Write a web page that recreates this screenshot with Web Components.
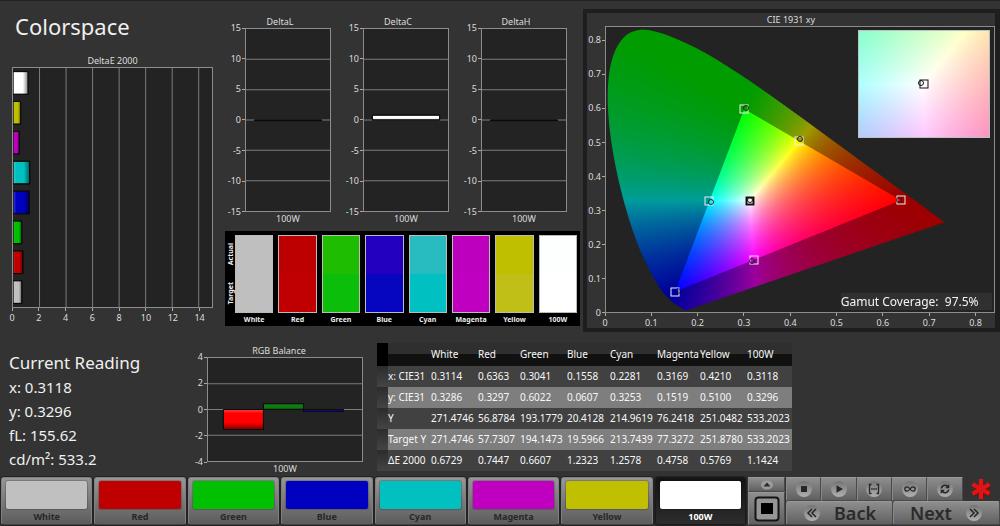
<!DOCTYPE html>
<html lang="en">
<head>
<meta charset="utf-8">
<title>Colorspace</title>
<style>
  body { margin: 0; background: #333; color: #f0f0f0; font-family: "Noto Sans", "Open Sans", sans-serif; }
</style>
</head>
<body>
<calibration-app></calibration-app>

<script>
const PATCHES = [
  { name: 'White',   x: .3114, y: .3286, Y: '271.4746', target: '271.4746', de: .6729,  actual: '#bfbfbf', ideal: '#bfbfbf' },
  { name: 'Red',     x: .6363, y: .3297, Y: '56.8784',  target: '57.7307',  de: .7447,  actual: '#bc0000', ideal: '#c00000' },
  { name: 'Green',   x: .3041, y: .6022, Y: '193.1779', target: '194.1473', de: .6607,  actual: '#1fbd00', ideal: '#0abe0a' },
  { name: 'Blue',    x: .1558, y: .0607, Y: '20.4128',  target: '19.5966',  de: 1.2323, actual: '#2300c0', ideal: '#0606c0' },
  { name: 'Cyan',    x: .2281, y: .3253, Y: '214.9619', target: '213.7439', de: 1.2578, actual: '#28bcc0', ideal: '#00c0c2' },
  { name: 'Magenta', x: .3169, y: .1519, Y: '76.2418',  target: '77.3272',  de: .4758,  actual: '#bd00bd', ideal: '#c000c0' },
  { name: 'Yellow',  x: .4210, y: .5100, Y: '251.0482', target: '251.8780', de: .5769,  actual: '#bfbf00', ideal: '#bfbf18' },
  { name: '100W',    x: .3118, y: .3296, Y: '533.2023', target: '533.2023', de: 1.1424, actual: '#fdfffe', ideal: '#ffffff' }
];
const FILL = { White: '#c0c0c0', Red: '#c00000', Green: '#00c000', Blue: '#0000c0', Cyan: '#00c0c0', Magenta: '#c000c0', Yellow: '#c0c000', '100W': '#ffffff' };

/* Framed plot with a heading, tick labels and grid lines; the series is slotted in. */
class PlotChart extends HTMLElement {
  connectedCallback() {
    const list = n => (this.getAttribute(n) || '').split(',').filter(Boolean);
    const xs = list('x-ticks'), ys = list('y-ticks');
    const over = +(this.getAttribute('overrun') || 0);
    const grid = this.getAttribute('grid');
    let lines = '';
    if (grid === 'h') for (let i = 1; i < ys.length - 1; i++) {
      const p = i / (ys.length - 1) * 100;
      lines += `<line x1="0" x2="100" y1="${p}" y2="${p}"/>`;
    }
    if (grid === 'v') for (let i = 1; i < xs.length; i++) {
      const p = i / (xs.length - 1 + over) * 100;
      lines += `<line y1="0" y2="100" x1="${p}" x2="${p}"/>`;
    }
    this.attachShadow({ mode: 'open' }).innerHTML = `<style>
      :host { display: grid; grid-template-columns: var(--y-axis, 16px) 1fr; grid-template-rows: 13px 1fr var(--x-axis, 12px); font-size: 9px; line-height: 14px; color: #ddd; min-width: 0; min-height: 0; }
      .title { grid-column: 1 / -1; text-align: center; }
      .y { display: flex; flex-direction: column; }
      .y .run { display: flex; flex-direction: column; justify-content: space-between; }
      .y .tick { height: 0; display: flex; align-items: center; justify-content: flex-end; gap: 1px; white-space: nowrap; }
      .y .tick::after { content: ""; width: 3px; height: 1px; background: #aaa; flex: none; }
      .plot { position: relative; background: #232323; border: 1px solid #8c8c8c; }
      .lines { position: absolute; inset: 0; width: 100%; height: 100%; }
      line { stroke: #7c7c7c; vector-effect: non-scaling-stroke; }
      .x { grid-column: 2; display: flex; }
      .x .run { display: flex; justify-content: space-between; }
      .x .tick { width: 0; display: flex; flex-direction: column; align-items: center; white-space: nowrap; }
      .x .tick::before { content: ""; width: 1px; height: 3px; background: #aaa; flex: none; }
      .x.single { justify-content: center; }
    </style>
    <div class="title">${this.getAttribute('heading')}</div>
    <div class="y">${ys.length ? `<div style="flex:${over}"></div><div class="run" style="flex:${ys.length - 1}">${ys.map(t => `<span class="tick">${t}</span>`).join('')}</div>` : ''}</div>
    <div class="plot"><svg class="lines" viewBox="0 0 100 100" preserveAspectRatio="none">${lines}</svg><slot></slot></div>
    ${xs.length > 1
      ? `<div class="x"><div class="run" style="flex:${xs.length - 1}">${xs.map(t => `<span class="tick">${t}</span>`).join('')}</div><div style="flex:${over}"></div></div>`
      : `<div class="x single">${xs[0] || ''}</div>`}`;
  }
}
customElements.define('plot-chart', PlotChart);

/* Bars in data units: "x y width height colour", separated by semicolons. */
class BarSeries extends HTMLElement {
  connectedCallback() {
    const across = this.hasAttribute('across');
    const bars = this.getAttribute('bars').split(';').map(b => b.trim().split(' '));
    this.attachShadow({ mode: 'open' }).innerHTML = `<style>
      :host { position: absolute; inset: 0; }
      svg { width: 100%; height: 100%; display: block; }
      rect { stroke: #0c0c0c; vector-effect: non-scaling-stroke; }
    </style>
    <svg viewBox="${this.getAttribute('range')}" preserveAspectRatio="none">
      <defs><linearGradient id="shade" x1="0" y1="0" x2="${across ? 1 : 0}" y2="${across ? 0 : 1}">
        <stop offset="0" stop-color="#fff" stop-opacity=".25"/><stop offset=".2" stop-color="#fff" stop-opacity="0"/>
        <stop offset=".65" stop-color="#000" stop-opacity="0"/><stop offset="1" stop-color="#000" stop-opacity=".5"/>
      </linearGradient></defs>
      ${bars.map(([x, y, w, h, c]) => { const box = `x="${x}" y="${y}" width="${w}" height="${h}"`; return `<rect ${box} fill="${c}"/><rect ${box} fill="url(#shade)"/>`; }).join('')}
    </svg>`;
  }
}
customElements.define('bar-series', BarSeries);

/* Chromaticity colouring over a window of the xy plane. */
const LOCUS = [[.1741,.005],[.1714,.0051],[.1644,.0109],[.1566,.0177],[.144,.0297],[.1241,.0578],[.1096,.0868],[.0913,.1327],[.0687,.2007],[.0454,.295],[.0235,.4127],[.0082,.5384],[.0039,.6548],[.0139,.7502],[.0389,.812],[.0743,.8338],[.1142,.8262],[.1547,.8059],[.1929,.7816],[.2296,.7543],[.3016,.6923],[.3731,.6245],[.4441,.5547],[.5125,.4866],[.5752,.4242],[.627,.3725],[.6658,.334],[.6915,.3083],[.719,.2809],[.7347,.2653]];
function chromaColor(x, y) {
  const X = x / y, Z = (1 - x - y) / y;
  const c = [3.2406 * X - 1.5372 - .4986 * Z, -.9689 * X + 1.8758 + .0415 * Z, .0557 * X - .204 + 1.057 * Z].map(v => Math.max(0, v));
  const m = Math.max(...c);
  return c.map(v => 255 * v / m);
}
class ChromaField extends HTMLElement {
  connectedCallback() {
    const [x0, x1, y0, y1] = this.getAttribute('window').split(' ').map(Number);
    this.attachShadow({ mode: 'open' }).innerHTML = `<style>:host { display: block; position: absolute; inset: 0; } canvas { display: block; width: 100%; height: 100%; }</style><canvas width="776" height="572"></canvas>`;
    const cv = this.shadowRoot.querySelector('canvas'), W = cv.width, H = cv.height, ctx = cv.getContext('2d');
    const layer = gain => {
      const c = document.createElement('canvas'); c.width = W; c.height = H;
      const g = c.getContext('2d'), im = g.createImageData(W, H);
      for (let j = 0, k = 0; j < H; j++) for (let i = 0; i < W; i++, k += 4) {
        const rgb = chromaColor(x0 + (i + .5) / W * (x1 - x0), y1 - (j + .5) / H * (y1 - y0));
        im.data[k] = rgb[0] * gain; im.data[k + 1] = rgb[1] * gain; im.data[k + 2] = rgb[2] * gain; im.data[k + 3] = 255;
      }
      g.putImageData(im, 0, 0);
      return c;
    };
    if (this.hasAttribute('plain')) { ctx.drawImage(layer(1), 0, 0); return; }
    const at = ([x, y]) => [(x - x0) / (x1 - x0) * W, (y1 - y) / (y1 - y0) * H];
    const locus = new Path2D(), pts = LOCUS.map(at);
    locus.moveTo(...pts[0]);
    for (let i = 0; i < pts.length - 1; i++) {
      const p = pts[Math.max(0, i - 1)], a = pts[i], b = pts[i + 1], n = pts[Math.min(pts.length - 1, i + 2)];
      locus.bezierCurveTo(a[0] + (b[0] - p[0]) / 6, a[1] + (b[1] - p[1]) / 6, b[0] - (n[0] - a[0]) / 6, b[1] - (n[1] - a[1]) / 6, b[0], b[1]);
    }
    locus.closePath();
    const gamut = new Path2D(); [[.64, .33], [.3, .6], [.15, .06]].map(at).forEach(p => gamut.lineTo(...p)); gamut.closePath();
    for (const [path, gain] of [[locus, .61], [gamut, 1]]) {
      ctx.save(); ctx.clip(path); ctx.drawImage(layer(gain), 0, 0); ctx.restore();
    }
  }
}
customElements.define('chroma-field', ChromaField);

class CieDiagram extends HTMLElement {
  connectedCallback() {
    const targets = [[.64,.33],[.3,.6],[.15,.06],[.2246,.3287],[.3209,.1542],[.4193,.5053]];
    const pin = (cls, x, y, ink) => `<i class="${cls}" style="left:${x / .842 * 100}%;bottom:${y / .842 * 100}%;color:${ink}"></i>`;
    this.attachShadow({ mode: 'open' }).innerHTML = `<style>
      :host { display: block; background: #333; border: 4px solid #1e1e1e; border-right-width: 5px; box-sizing: border-box; min-width: 0; }
      plot-chart { height: 100%; --y-axis: 18px; --x-axis: 15px; }
      i { position: absolute; box-sizing: border-box; border: 1px solid; transform: translate(-50%, 50%); }
      .target { width: 9px; height: 9px; }
      .read { width: 6px; height: 6px; border-radius: 50%; }
      .white { border-width: 2px; background: #fff; }
      .inset { position: absolute; top: 3px; right: 4px; width: 34%; height: 38%; box-sizing: border-box; border: 1px solid #b8c4c0; }
      .inset .target { left: 50%; bottom: 50%; color: #111; }
      .inset .read { left: 48%; bottom: 51%; color: #111; }
      output { position: absolute; right: 2px; bottom: 2px; width: 39%; background: #303030; color: #f4f4f4; font-size: 12px; line-height: 17px; white-space: pre; }
    </style>
    <plot-chart heading="CIE 1931 xy" overrun=".42" x-ticks="0,0.1,0.2,0.3,0.4,0.5,0.6,0.7,0.8" y-ticks="0.8,0.7,0.6,0.5,0.4,0.3,0.2,0.1,0">
      <chroma-field window="0 0.842 0 0.842"></chroma-field>
      ${targets.map(([x, y]) => pin('target', x, y, '#eee')).join('')}
      ${PATCHES.slice(1, 7).map(p => pin('read', p.x, p.y, p.name === 'Blue' ? '#0008' : '#222')).join('')}
      ${pin('target white', .3127, .329, '#111')}${pin('read', .3118, .3296, '#111')}
      <div class="inset"><chroma-field plain window="0.2895 0.337 0.3036 0.355"></chroma-field><i class="target"></i><i class="read"></i></div>
      <output>Gamut Coverage:  97.5%</output>
    </plot-chart>`;
  }
}
customElements.define('cie-diagram', CieDiagram);

class SwatchCompare extends HTMLElement {
  connectedCallback() {
    this.attachShadow({ mode: 'open' }).innerHTML = `<style>
      :host { display: flex; gap: 5px; background: #000; padding: 4px 3px 2px 1px; font-size: 7px; font-weight: 700; line-height: 13px; color: #eee; }
      .side { width: 9px; display: flex; flex-direction: column; justify-content: space-around; align-items: center; margin: 0 -5px 11px 0; }
      .side span { writing-mode: vertical-rl; transform: rotate(180deg); line-height: 9px; }
      figure { flex: 1; margin: 0; min-width: 0; display: flex; flex-direction: column; }
      .pair { height: 76px; border: 1px solid #bbb; display: grid; grid-template-rows: 1fr 1fr; }
      figcaption { display: flex; justify-content: center; height: 11px; white-space: nowrap; }
    </style>
    <div class="side"><span>Actual</span><span>Target</span></div>
    ${PATCHES.map(p => `<figure><div class="pair"><div style="background:${p.actual}"></div><div style="background:${p.ideal}"></div></div><figcaption>${p.name}</figcaption></figure>`).join('')}`;
  }
}
customElements.define('swatch-compare', SwatchCompare);

class CurrentReading extends HTMLElement {
  connectedCallback() {
    this.attachShadow({ mode: 'open' }).innerHTML = `<style>
      :host { display: block; padding: 19px 0 5px 9px; font-size: 15px; line-height: 24px; white-space: nowrap; }
      h2 { margin: 0; font-size: 17px; line-height: 24px; font-weight: 400; }
      p { margin: 0; }
    </style><h2>Current Reading</h2><p>x: 0.3118</p><p>y: 0.3296</p><p>fL: 155.62</p><p>cd/m²: 533.2</p>`;
  }
}
customElements.define('current-reading', CurrentReading);

class ReadingsTable extends HTMLElement {
  connectedCallback() {
    const rows = [
      ['x: CIE31', ...PATCHES.map(p => p.x.toFixed(4))], ['y: CIE31', ...PATCHES.map(p => p.y.toFixed(4))],
      ['Y', ...PATCHES.map(p => p.Y)], ['Target Y', ...PATCHES.map(p => p.target)], ['ΔE 2000', ...PATCHES.map(p => p.de.toFixed(4))]
    ];
    this.attachShadow({ mode: 'open' }).innerHTML = `<style>
      :host { display: block; padding: 11px 0 0 14px; min-width: 0; font-size: 10px; }
      table { width: 100%; border-collapse: collapse; table-layout: fixed; color: #f8f8f8; line-height: 21px; white-space: nowrap; }
      th, td { padding: 0; text-align: left; font-weight: 400; }
      thead tr { background: linear-gradient(#2f2f2f 50%, #111 50%); line-height: 23px; }
      tbody tr { background: #414141; }
      tbody tr:nth-child(even) { background: #7e7e7e; }
      .grip { background: linear-gradient(#2c2c2c, #444); }
      thead .grip { background: #000; }
    </style>
    <table><colgroup>${[11, 43, 47, 42, 47, 43, 47, 43, 47, 45].map(w => `<col style="width:${w / 415 * 100}%">`).join('')}</colgroup>
      <thead><tr><td class="grip"></td><td></td>${PATCHES.map(p => `<th scope="col">${p.name}</th>`).join('')}</tr></thead>
      <tbody>${rows.map(([h, ...v]) => `<tr><td class="grip"></td><th scope="row">${h}</th>${v.map(t => `<td>${t}</td>`).join('')}</tr>`).join('')}</tbody>
    </table>`;
  }
}
customElements.define('readings-table', ReadingsTable);

class PatchButton extends HTMLElement {
  connectedCallback() {
    this.attachShadow({ mode: 'open' }).innerHTML = `<style>
      :host { display: block; flex: 1; min-width: 0; }
      button { width: 100%; display: block; border: 1px solid #808080; border-bottom-color: #444; border-radius: 3px; background: linear-gradient(#989898, #5c5c5c); padding: 3px 4px 0; font: 700 9px/15px "Noto Sans", sans-serif; color: #272727; box-shadow: 0 0 0 1px #222; }
      span { display: block; height: 28px; border-radius: 2px; background: var(--patch); box-shadow: 0 0 1px 1px #0003; }
      :host([selected]) button { background: linear-gradient(#141414, #2c2c2c); border-color: #1a1a1a; color: #fff; }
    </style><button type="button"><span></span><slot></slot></button>`;
  }
}
customElements.define('patch-button', PatchButton);

const disc = inner => `<svg class="disc" width="18" height="18" viewBox="0 0 18 18"><defs><linearGradient id="d" x2="0" y2="1"><stop stop-color="#747474"/><stop offset="1" stop-color="#b0b0b0"/></linearGradient></defs><circle cx="9" cy="9" r="8" fill="url(#d)"/>${inner}</svg>`;
const ICONS = {
  Stop: '<path d="M6 6h6v6H6z" fill="#262626"/>',
  Play: '<path d="M6.5 5.2 13 9l-6.500 3.800z" fill="#262626"/>',
  Range: '<path d="M6.500 4.500H4.500v9h2M11.500 4.500h2v9h-2" fill="none" stroke="#262626" stroke-width="1.300"/><path d="M6.200 9h1.500m.6 0h1.500m.6 0h1.500" stroke="#262626" stroke-width="1.500"/>',
  Loop: '<path d="M9 9C7.800 7.300 7 6.800 6 6.800a2.200 2.200 0 0 0 0 4.400C7 11.200 7.800 10.700 9 9s2-2.200 3-2.200a2.200 2.200 0 0 1 0 4.400c-1 0-1.800-.5-3-2.200z" fill="none" stroke="#262626" stroke-width="1.300"/>',
  Refresh: '<path d="M5.300 8.500A3.700 3.700 0 0 1 11.500 6.300M12.700 9.500A3.700 3.700 0 0 1 6.500 11.700" fill="none" stroke="#262626" stroke-width="1.600"/><path d="M13.300 4v4.200H9.200zM4.700 14V9.800h4.100z" fill="#262626"/>'
};
class TransportPad extends HTMLElement {
  connectedCallback() {
    this.attachShadow({ mode: 'open' }).innerHTML = `<style>
      :host { display: grid; grid-template-columns: 37fr 214fr; gap: 1px; min-width: 0; }
      button { margin: 0; padding: 0; border: 1px solid #4a4a4a; border-top-color: #999; border-left-color: #888; background: linear-gradient(#8e8e8e, #606060); color: #2a2a2a; display: flex; align-items: center; justify-content: center; min-width: 0; }
      .left { display: grid; grid-template-rows: 15px 1fr; }
      .right { display: grid; grid-template-rows: 24px 1fr; }
      .tools { display: grid; grid-template-columns: repeat(5, 35fr) 37fr; }
      .nav { display: grid; grid-template-columns: 1fr 1fr; }
      .nav button { font: 600 18px/20px "Noto Sans", sans-serif; gap: 13px; border-radius: 2px; }
      .star { place-self: center; }
      svg { display: block; flex: none; }
    </style>
    <div class="left">
      <button type="button" aria-label="Expand"><svg width="14" height="10" viewBox="0 0 14 10"><ellipse cx="7" cy="5" rx="6" ry="4.500" fill="#9c9c9c"/><path d="M3.500 6.500 7 2.500l3.500 4z" fill="#2a2a2a"/></svg></button>
      <button type="button" aria-label="Pattern window"><svg width="26" height="26" viewBox="0 0 26 26"><rect x="1.500" y="1.500" width="23" height="23" rx="3" fill="#959595" stroke="#151515" stroke-width="2"/><rect x="7" y="7" width="12" height="11" fill="#000"/></svg></button>
    </div>
    <div class="right">
      <div class="tools">${Object.entries(ICONS).map(([n, i]) => `<button type="button" aria-label="${n}">${disc(i)}</button>`).join('')}
        <svg class="star" width="24" height="24" viewBox="0 0 24 24"><path d="M12 12V3M12 12l8-4.500M12 12l8 4.500M12 12v9M12 12l-8 4.500M12 12 4 7.500" transform="translate(1 1)" stroke="#701010" stroke-width="4.500"/><path d="M12 12V2M12 12l8.500-4.800M12 12l8.500 4.800M12 12v10M12 12l-8.500 4.800M12 12 3.500 7.200" stroke="#e01414" stroke-width="4.200"/></svg>
      </div>
      <div class="nav">
        <button type="button">${disc('<path d="m9 5-4 4 4 4M13 5 9 9l4 4" fill="none" stroke="#262626" stroke-width="1.500"/>')}Back</button>
        <button type="button">Next${disc('<path d="m5 5 4 4-4 4M9 5l4 4-4 4" fill="none" stroke="#262626" stroke-width="1.500"/>')}</button>
      </div>
    </div>`;
  }
}
customElements.define('transport-pad', TransportPad);

class CalibrationApp extends HTMLElement {
  connectedCallback() {
    const de = [...PATCHES].reverse().map((p, i) => `0 ${i + .12} ${p.de} .76 ${FILL[p.name]}`).join(';');
    const delta = (name, y, h) => `<plot-chart heading="${name}" grid="h" y-ticks="15,10,5,0,-5,-10,-15" x-ticks="100W"><bar-series range="0 -15 1 30" bars="0.1 ${y} 0.8 ${h} #fff"></bar-series></plot-chart>`;
    this.attachShadow({ mode: 'open' }).innerHTML = `<style>
      :host { display: grid; grid-template-rows: 1fr auto auto; min-height: 100vh; box-sizing: border-box; border-top: 1px solid #222; }
      .top { display: grid; grid-template-columns: 225fr 355fr 420fr; }
      .errors { display: flex; flex-direction: column; padding: 0 12px 7px; min-width: 0; }
      h1 { margin: 0; padding: 10px 0 12px 3px; font-size: 22px; line-height: 31px; font-weight: 400; }
      .errors plot-chart { flex: 1; --y-axis: 0px; --x-axis: 17px; }
      .deltas { display: flex; flex-direction: column; gap: 7px; padding: 14px 0 6px; min-width: 0; }
      .trio { flex: 1; display: grid; grid-template-columns: repeat(3, 1fr); gap: 16px; padding: 0 13px 0 4px; }
      cie-diagram { margin: 8px 0 0 3px; }
      .middle { display: grid; grid-template-columns: 195fr 168fr 429fr 208fr; }
      .balance { --y-axis: 12px; padding: 12px 0 2px; }
      footer { display: grid; grid-template-columns: 745fr 252fr; gap: 2px; padding: 1px 0 1px 1px; }
      nav { display: flex; gap: 2px; }
    </style>
    <section class="top">
      <div class="errors"><h1>Colorspace</h1>
        <plot-chart heading="DeltaE 2000" grid="v" overrun=".5" x-ticks="0,2,4,6,8,10,12,14"><bar-series across range="0 0 15 8" bars="${de}"></bar-series></plot-chart></div>
      <div class="deltas"><div class="trio">${delta('DeltaL', 0, .1)}${delta('DeltaC', -.8, .8)}${delta('DeltaH', 0, .1)}</div><swatch-compare></swatch-compare></div>
      <cie-diagram></cie-diagram>
    </section>
    <section class="middle">
      <current-reading></current-reading>
      <plot-chart class="balance" heading="RGB Balance" grid="h" y-ticks="4,2,0,-2,-4" x-ticks="100W"><bar-series range="0 -4 1 8" bars="0.1 0 0.26 1.55 #ff0000;0.36 -0.45 0.26 0.45 #0c7c0c;0.62 0 0.26 0.15 #1010a0"></bar-series></plot-chart>
      <readings-table></readings-table>
    </section>
    <footer>
      <nav aria-label="Patches">${PATCHES.map(p => `<patch-button style="--patch:${FILL[p.name]}"${p.name === '100W' ? ' selected' : ''}>${p.name}</patch-button>`).join('')}</nav>
      <transport-pad></transport-pad>
    </footer>`;
  }
}
customElements.define('calibration-app', CalibrationApp);
</script>
</body>
</html>
